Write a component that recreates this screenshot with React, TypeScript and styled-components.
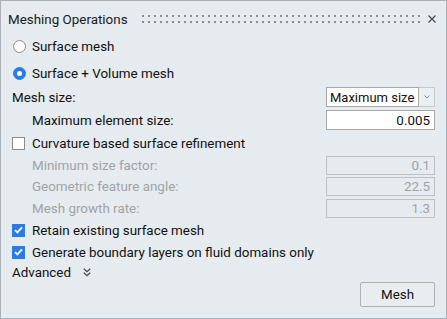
import React from "react";
import styled, { createGlobalStyle } from "styled-components";

const Global = createGlobalStyle`
  html, body { margin: 0; padding: 0; background: #ffffff; overflow: hidden; }
  * { box-sizing: border-box; }
`;

const Panel = styled.div`
  width: 447px;
  height: 319px;
  border: 1px solid #a9b1b8;
  background: #e5ebef;
  padding: 0 11px 0 11px;
  display: flex;
  flex-direction: column;
  font-family: Roboto, "Liberation Sans", sans-serif;
  font-size: 13.4px;
  color: #111111;
`;

const TitleBar = styled.div`
  height: 36px;
  margin: 0 -1px 0 -4px;
  display: flex;
  align-items: center;
`;

const Title = styled.span`
  color: #1a1a1a;
  white-space: nowrap;
`;

const Grip = styled.svg`
  margin-left: auto;
  display: block;
`;

const CloseBtn = styled.svg`
  margin-left: 8px;
  display: block;
`;

const Row = styled.div<{ $mt?: number; $h?: number }>`
  display: flex;
  align-items: center;
  height: ${(p) => p.$h ?? 20}px;
  margin-top: ${(p) => p.$mt ?? 0}px;
  white-space: nowrap;
`;

const Label = styled.span<{ $indent?: boolean; $disabled?: boolean }>`
  padding-left: ${(p) => (p.$indent ? 20 : 0)}px;
  color: ${(p) => (p.$disabled ? "#a0a3a6" : "#111111")};
`;

const RadioCircle = styled.span<{ $checked?: boolean }>`
  width: 13px;
  height: 13px;
  margin-left: 1px;
  margin-right: 6px;
  border-radius: 50%;
  border: 1px solid ${(p) => (p.$checked ? "#2a7be4" : "#8a8a8a")};
  background: ${(p) => (p.$checked ? "#2a7be4" : "#ffffff")};
  display: flex;
  align-items: center;
  justify-content: center;
  &::after {
    content: "";
    width: 5px;
    height: 5px;
    border-radius: 50%;
    background: #ffffff;
    display: ${(p) => (p.$checked ? "block" : "none")};
  }
`;

const CheckBox = styled.span<{ $checked?: boolean }>`
  width: 13px;
  height: 13px;
  margin-right: 7px;
  border: 1px solid ${(p) => (p.$checked ? "#2a7be4" : "#8a8a8a")};
  background: ${(p) => (p.$checked ? "#2a7be4" : "#ffffff")};
  display: flex;
  align-items: center;
  justify-content: center;
`;

const Field = styled.div<{ $disabled?: boolean; $h?: number }>`
  margin-left: auto;
  width: 109px;
  height: ${(p) => p.$h ?? 20}px;
  border: 1px solid ${(p) => (p.$disabled ? "#bcc1c5" : "#a8a8a8")};
  background: ${(p) => (p.$disabled ? "#e5ebef" : "#ffffff")};
  color: ${(p) => (p.$disabled ? "#a0a3a6" : "#111111")};
  display: flex;
  align-items: center;
  justify-content: flex-end;
  padding-right: 4px;
`;

const Select = styled.div`
  margin-left: auto;
  width: 109px;
  height: 20px;
  display: flex;
`;

const SelectValue = styled.div`
  flex: 1;
  background: #ffffff;
  border: 1px solid #a8a8a8;
  display: flex;
  align-items: center;
  padding-left: 3px;
  font-size: 13px;
  overflow: hidden;
`;

const SelectArrow = styled.div`
  width: 16px;
  border: 1px solid #c4c9cc;
  border-left: none;
  background: #eceff1;
  display: flex;
  align-items: center;
  justify-content: center;
`;

const Chevrons = styled.svg`
  margin-left: 12px;
  display: block;
`;

const Footer = styled.div`
  display: flex;
  justify-content: flex-end;
`;

const Button = styled.button`
  width: 75px;
  height: 25px;
  border: 1px solid #adb2b6;
  border-radius: 2px;
  background: #e8edf0;
  font-family: Roboto, "Liberation Sans", sans-serif;
  font-size: 13.4px;
  color: #111111;
  padding: 0;
`;

const Check = () => (
  <svg width="9" height="8" viewBox="0 0 9 8">
    <path d="M1 4.2 L3.4 6.4 L8 1.4" fill="none" stroke="#ffffff" strokeWidth="1.8" />
  </svg>
);

export default function App() {
  return (
    <>
      <Global />
      <Panel>
        <TitleBar>
          <Title>Meshing Operations</Title>
          <Grip width="278" height="8" viewBox="0 0 278 8">
            <defs>
              <pattern id="dots" width="6" height="6" patternUnits="userSpaceOnUse">
                <rect x="0" y="0" width="2" height="2" fill="#8a8d90" />
              </pattern>
            </defs>
            <rect x="0" y="0" width="278" height="8" fill="url(#dots)" />
          </Grip>
          <CloseBtn width="8" height="8" viewBox="0 0 8 8">
            <path d="M0.5 0.5 L7.5 7.5 M7.5 0.5 L0.5 7.5" stroke="#4a4a4a" strokeWidth="1.2" />
          </CloseBtn>
        </TitleBar>

        <Row $h={18}>
          <RadioCircle />
          <Label>Surface mesh</Label>
        </Row>
        <Row $h={18} $mt={9}>
          <RadioCircle $checked />
          <Label>Surface + Volume mesh</Label>
        </Row>

        <Row $mt={5}>
          <Label>Mesh size:</Label>
          <Select>
            <SelectValue>Maximum size</SelectValue>
            <SelectArrow>
              <svg width="6" height="4" viewBox="0 0 6 4">
                <path d="M0.5 0.5 L3 3 L5.5 0.5" fill="none" stroke="#8f9396" strokeWidth="1" />
              </svg>
            </SelectArrow>
          </Select>
        </Row>
        <Row $mt={3}>
          <Label $indent>Maximum element size:</Label>
          <Field>0.005</Field>
        </Row>
        <Row $mt={3}>
          <CheckBox />
          <Label>Curvature based surface refinement</Label>
        </Row>
        <Row $mt={2}>
          <Label $indent $disabled>Minimum size factor:</Label>
          <Field $disabled $h={19}>0.1</Field>
        </Row>
        <Row $mt={1}>
          <Label $indent $disabled>Geometric feature angle:</Label>
          <Field $disabled $h={19}>22.5</Field>
        </Row>
        <Row $mt={2}>
          <Label $indent $disabled>Mesh growth rate:</Label>
          <Field $disabled $h={19}>1.3</Field>
        </Row>
        <Row $mt={2}>
          <CheckBox $checked>
            <Check />
          </CheckBox>
          <Label>Retain existing surface mesh</Label>
        </Row>
        <Row $mt={2}>
          <CheckBox $checked>
            <Check />
          </CheckBox>
          <Label>Generate boundary layers on fluid domains only</Label>
        </Row>
        <Row>
          <Label>Advanced</Label>
          <Chevrons width="8" height="9" viewBox="0 0 8 9">
            <path d="M0.8 0.8 L4 3.8 L7.2 0.8 M0.8 4.8 L4 7.8 L7.2 4.8" fill="none" stroke="#4a4a4a" strokeWidth="1.2" />
          </Chevrons>
        </Row>
        <Footer>
          <Button>Mesh</Button>
        </Footer>
      </Panel>
    </>
  );
}
